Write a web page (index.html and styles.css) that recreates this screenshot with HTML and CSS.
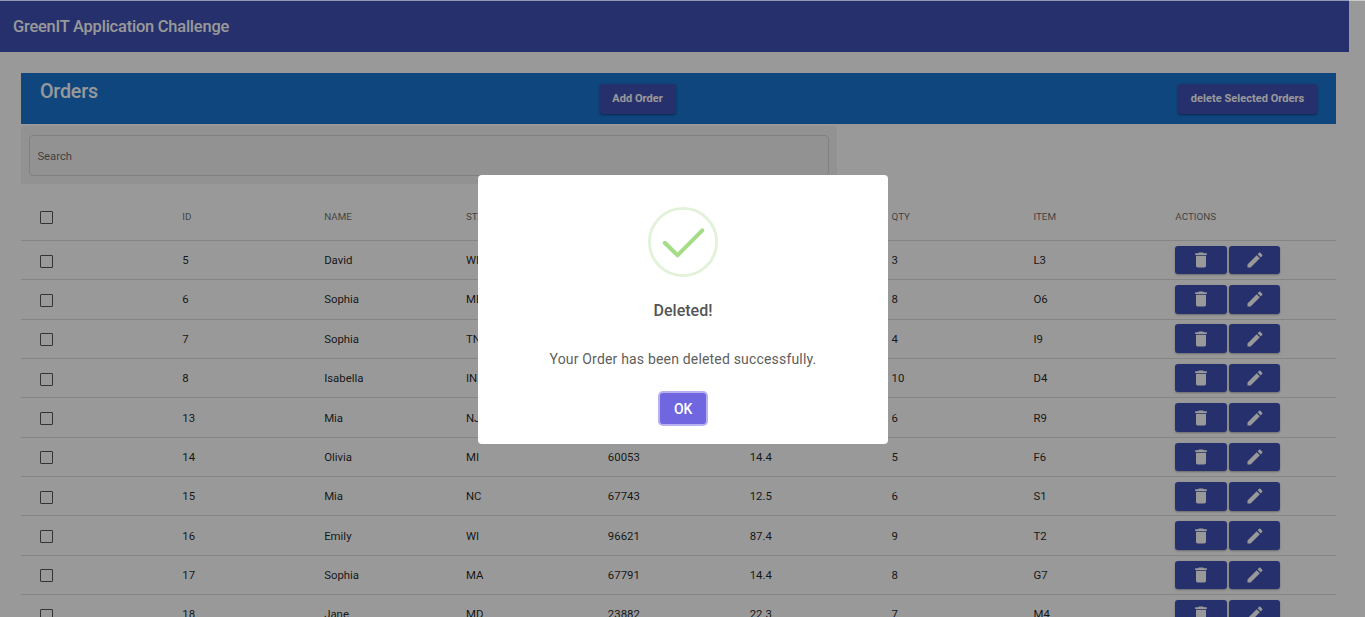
FILE: index.html
```html
<!DOCTYPE html>
<html lang="en">
<head>
<meta charset="utf-8">
<title>GreenIT Application Challenge</title>
<link rel="stylesheet" href="styles.css">
</head>
<body>
<svg class="sprite" aria-hidden="true">
  <symbol id="trash" viewBox="0 0 24 24"><path d="M6 19c0 1.1.9 2 2 2h8c1.1 0 2-.9 2-2V7H6v12zM19 4h-3.500l-1-1h-5l-1 1H5v2h14V4z"/></symbol>
  <symbol id="pencil" viewBox="0 0 24 24"><path d="M3 17.250V21h3.750L17.810 9.940l-3.750-3.750L3 17.250zM20.710 7.040c.39-.39.39-1.020 0-1.410l-2.340-2.340c-.39-.39-1.020-.39-1.410 0l-1.830 1.830 3.750 3.750 1.830-1.830z"/></symbol>
</svg>
<div class="page">
  <header class="toolbar">GreenIT Application Challenge</header>
  <main class="content">
    <section class="orders-bar">
      <h1 class="orders-title">Orders</h1>
      <button class="btn add">Add Order</button>
      <button class="btn delete">delete Selected Orders</button>
    </section>
    <div class="search"><div class="search-field">Search</div></div>
    <div class="table">
      <div class="row head"><i class="box"></i><span>ID</span><span>NAME</span><span>STATE</span><span></span><span></span><span>QTY</span><span>ITEM</span><span>ACTIONS</span></div>
      <div class="row"><i class="box"></i><span>5</span><span>David</span><span>WI</span><span></span><span></span><span>3</span><span>L3</span><div class="actions"><button class="icon-btn"><svg><use href="#trash"/></svg></button><button class="icon-btn edit"><svg><use href="#pencil"/></svg></button></div></div>
      <div class="row"><i class="box"></i><span>6</span><span>Sophia</span><span>MD</span><span></span><span></span><span>8</span><span>O6</span><div class="actions"><button class="icon-btn"><svg><use href="#trash"/></svg></button><button class="icon-btn edit"><svg><use href="#pencil"/></svg></button></div></div>
      <div class="row"><i class="box"></i><span>7</span><span>Sophia</span><span>TN</span><span></span><span></span><span>4</span><span>I9</span><div class="actions"><button class="icon-btn"><svg><use href="#trash"/></svg></button><button class="icon-btn edit"><svg><use href="#pencil"/></svg></button></div></div>
      <div class="row"><i class="box"></i><span>8</span><span>Isabella</span><span>IN</span><span></span><span></span><span>10</span><span>D4</span><div class="actions"><button class="icon-btn"><svg><use href="#trash"/></svg></button><button class="icon-btn edit"><svg><use href="#pencil"/></svg></button></div></div>
      <div class="row"><i class="box"></i><span>13</span><span>Mia</span><span>NJ</span><span></span><span></span><span>6</span><span>R9</span><div class="actions"><button class="icon-btn"><svg><use href="#trash"/></svg></button><button class="icon-btn edit"><svg><use href="#pencil"/></svg></button></div></div>
      <div class="row"><i class="box"></i><span>14</span><span>Olivia</span><span>MI</span><span>60053</span><span>14.4</span><span>5</span><span>F6</span><div class="actions"><button class="icon-btn"><svg><use href="#trash"/></svg></button><button class="icon-btn edit"><svg><use href="#pencil"/></svg></button></div></div>
      <div class="row"><i class="box"></i><span>15</span><span>Mia</span><span>NC</span><span>67743</span><span>12.5</span><span>6</span><span>S1</span><div class="actions"><button class="icon-btn"><svg><use href="#trash"/></svg></button><button class="icon-btn edit"><svg><use href="#pencil"/></svg></button></div></div>
      <div class="row"><i class="box"></i><span>16</span><span>Emily</span><span>WI</span><span>96621</span><span>87.4</span><span>9</span><span>T2</span><div class="actions"><button class="icon-btn"><svg><use href="#trash"/></svg></button><button class="icon-btn edit"><svg><use href="#pencil"/></svg></button></div></div>
      <div class="row"><i class="box"></i><span>17</span><span>Sophia</span><span>MA</span><span>67791</span><span>14.4</span><span>8</span><span>G7</span><div class="actions"><button class="icon-btn"><svg><use href="#trash"/></svg></button><button class="icon-btn edit"><svg><use href="#pencil"/></svg></button></div></div>
      <div class="row"><i class="box"></i><span>18</span><span>Jane</span><span>MD</span><span>23882</span><span>22.3</span><span>7</span><span>M4</span><div class="actions"><button class="icon-btn"><svg><use href="#trash"/></svg></button><button class="icon-btn edit"><svg><use href="#pencil"/></svg></button></div></div>
    </div>
  </main>
</div>
<div class="overlay">
  <div class="dialog" role="dialog">
    <svg class="success" viewBox="0 0 70 70"><circle cx="35" cy="35" r="33.600"/><path d="M16.800 35.800 29.500 48.300 54.300 23.300"/></svg>
    <h2 class="dialog-title">Deleted!</h2>
    <p class="dialog-text">Your Order has been deleted successfully.</p>
    <button class="ok">OK</button>
  </div>
</div>
</body>
</html>
```
FILE: styles.css
```css
* { box-sizing: border-box; }
html, body { height: 100%; }
body { margin: 0; overflow: hidden; background: #fff; font-family: Roboto, "Liberation Sans", sans-serif; color: rgba(0,0,0,.87); }
button { font-family: inherit; border: 0; padding: 0; margin: 0; }
.sprite { display: none; }
.page { height: 617px; overflow: hidden; padding-right: 16px; }
.toolbar { height: 52px; padding: 1px 13px 0; display: flex; align-items: center; background: #3f51b5; color: #fff; font-size: 16.4px; font-weight: 500; letter-spacing: -.19px; }
.content { padding: 21px 13px 0 21px; }
.orders-bar { height: 51px; background: #1976d2; display: grid; grid-template-columns: 579px 76px 1fr; align-items: start; padding: 11px 19px 0 0; }
.orders-title { margin: -5px 0 0 19px; color: #fff; font-size: 19.7px; line-height: 26px; font-weight: 500; letter-spacing: -.2px; }
.btn { height: 29.5px; border-radius: 3px; background: #3f51b5; color: #fff; font-size: 11px; font-weight: 700; letter-spacing: .04px; box-shadow: 0 1px 2px rgba(0,0,0,.3), 0 1px 3px rgba(0,0,0,.15); }
.add { width: 76px; padding-right: 1px; }
.delete { justify-self: end; width: 139px; }
.search { width: 816px; height: 58px; margin-top: 2px; padding: 9px 8px; background: #f4f4f4; border-radius: 3px 3px 0 0; }
.search-field { height: 41px; border: 1px solid #d5d5d5; border-radius: 4px; padding: 1px 7.400px 0; display: flex; align-items: center; font-size: 11.3px; color: rgba(0,0,0,.6); }
.table { padding-top: 11px; }
.row { height: 39.36px; padding: 0 18.800px 0 19.400px; display: grid; grid-template-columns: repeat(9, minmax(0, 1fr)); align-items: center; border-bottom: 1px solid rgba(0,0,0,.13); font-size: 11.4px; }
.head { height: 45.9px; font-size: 9.840px; color: rgba(0,0,0,.6); }
.head span { position: relative; top: -1px; }
.box { width: 13px; height: 13px; margin-left: -.6px; border: 1px solid #555; border-radius: 1px; position: relative; top: 1px; }
.head .box { top: 0.2px; }
.actions { display: flex; gap: 2px; }
.icon-btn { width: 52px; height: 28.700px; border-radius: 3px; background: #3f51b5; color: #fff; display: grid; place-items: center; box-shadow: 0 1px 2px rgba(0,0,0,.3); }
.edit { width: 51px; }
.icon-btn svg { width: 20px; height: 20px; fill: currentColor; }
.overlay { position: fixed; inset: 0; background: rgba(0,0,0,.4); border-top: 1px solid rgba(255,255,255,.5); display: flex; justify-content: center; align-items: flex-start; padding-top: 174px; }
.dialog { width: 410px; height: 269px; background: #fff; border-radius: 4px; display: flex; flex-direction: column; align-items: center; padding-top: 32px; }
.success { width: 70px; height: 70px; fill: none; }
.success circle { stroke: #e1f2d9; stroke-width: 2.8px; }
.success path { stroke: #a5dc86; stroke-width: 4px; stroke-linecap: round; stroke-linejoin: round; }
.dialog-title { margin: 22px 0 0 1px; font-size: 16px; line-height: 24px; font-weight: 500; color: #545454; }
.dialog-text { margin: 26px 0 0 1px; font-size: 14px; line-height: 20px; letter-spacing: .18px; color: #5e5e5e; }
.ok { margin-top: 24px; width: 46px; height: 31px; border-radius: 3px; background: #7066e0; color: #fff; font-size: 14px; letter-spacing: -.3px; padding-left: 1px; font-weight: 500; box-shadow: 0 0 0 2px #b7b2ef; }
```
